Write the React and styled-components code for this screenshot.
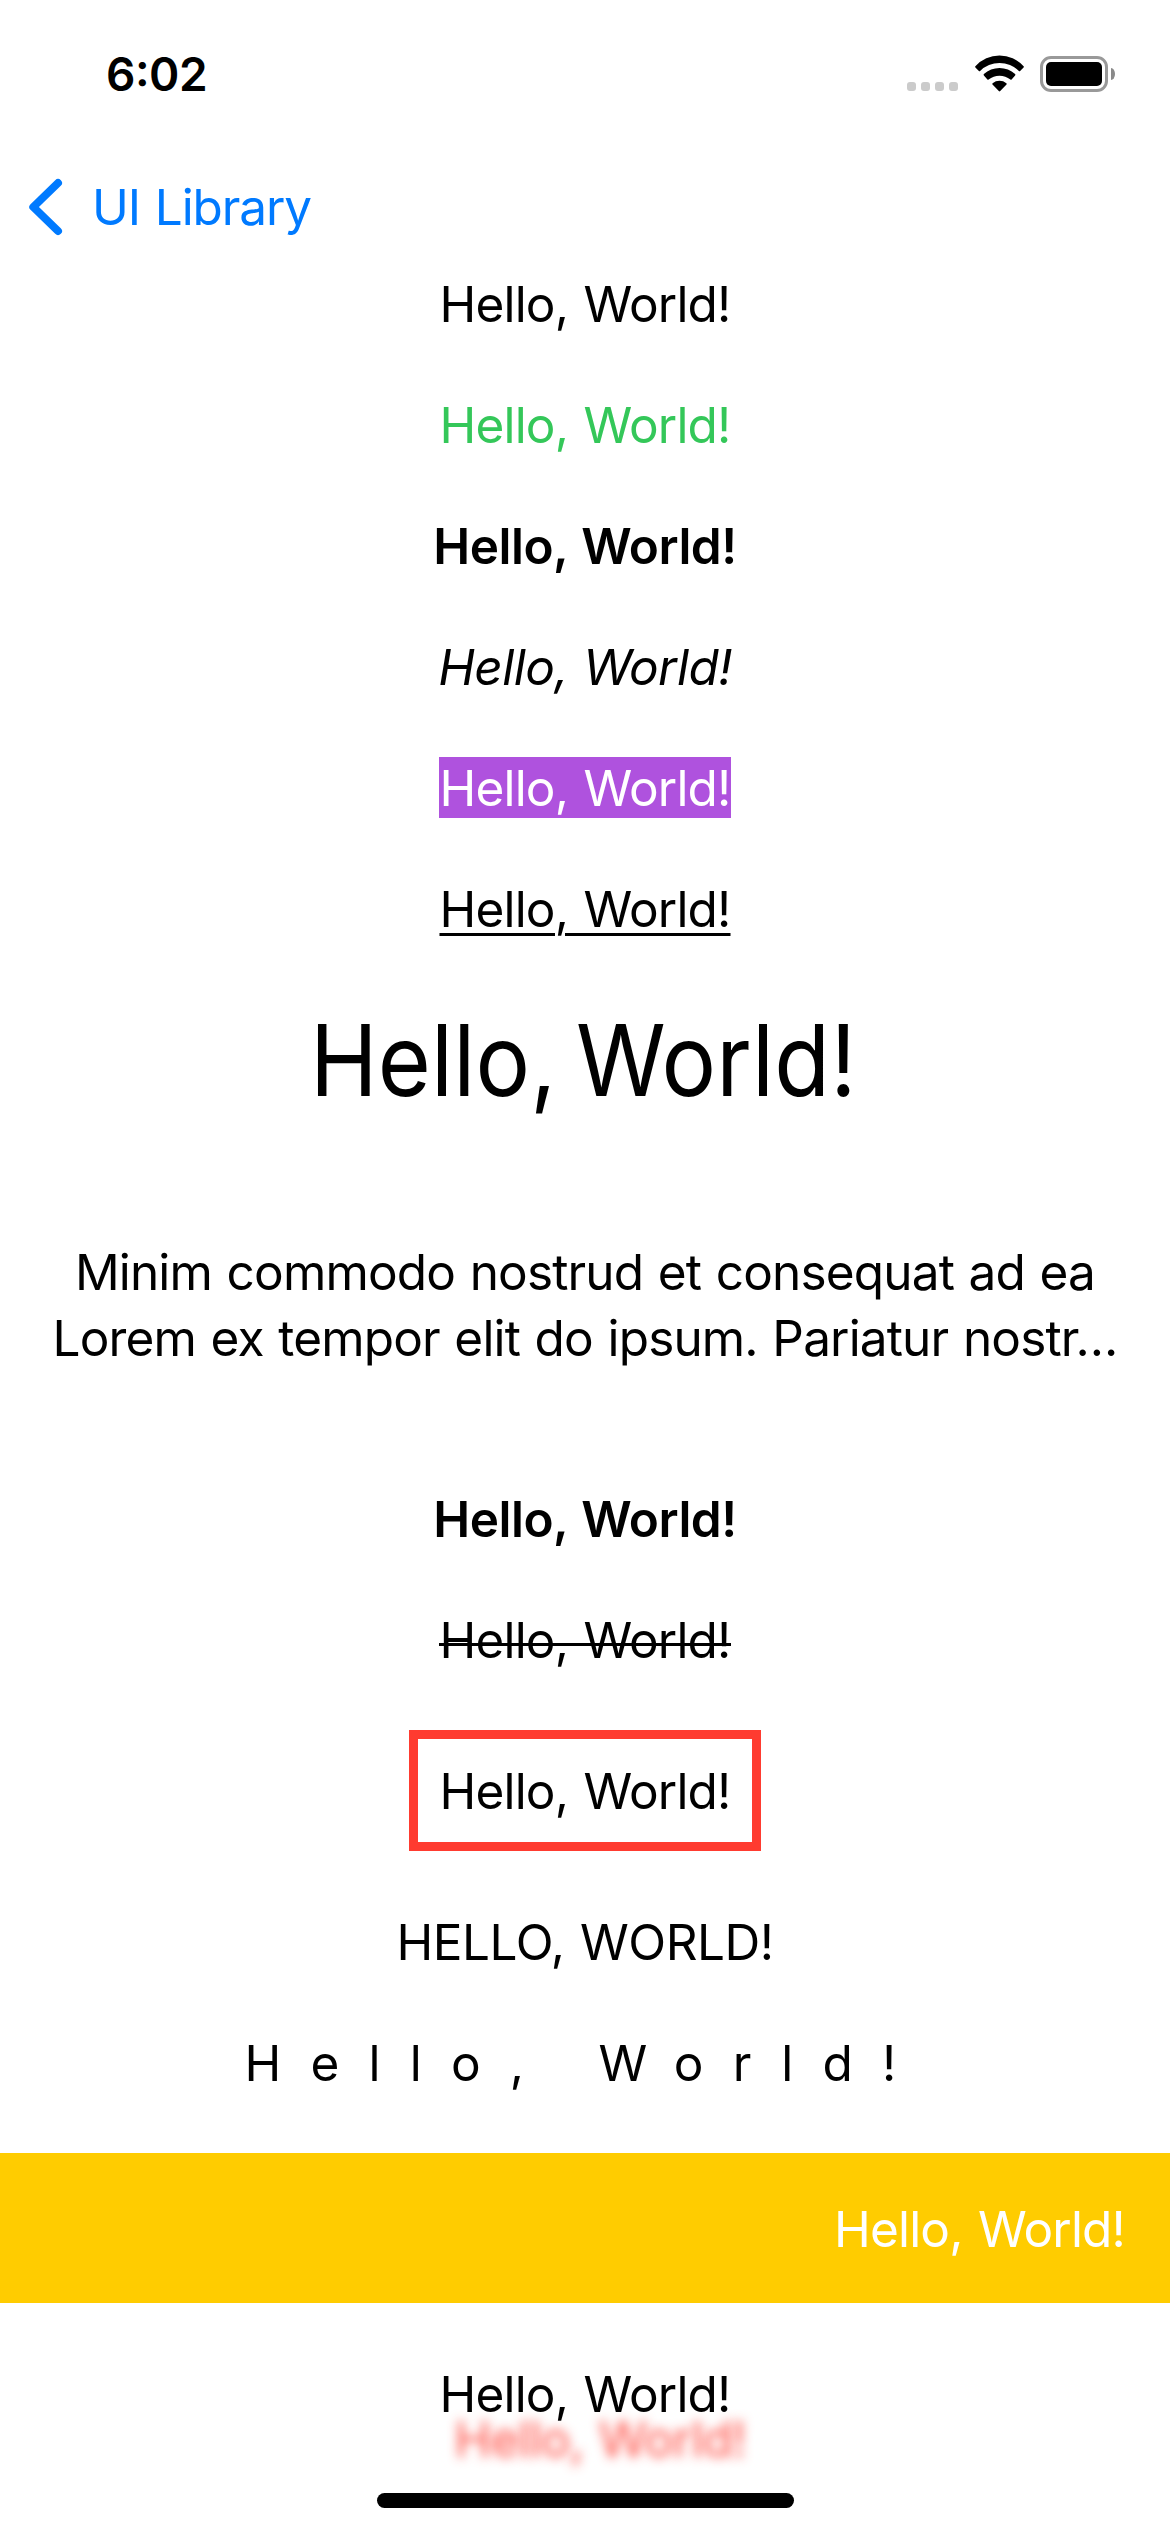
import React from "react";
import styled, { createGlobalStyle } from "styled-components";

const GlobalStyle = createGlobalStyle`
  * {
    box-sizing: border-box;
  }
  body {
    margin: 0;
    background: #fff;
    color: #000;
    font-family: Inter, Roboto, sans-serif;
    font-feature-settings: "calt" 1;
  }
`;

const Screen = styled.main`
  position: relative;
  width: 1170px;
  height: 2532px;
  overflow: hidden;
  background: #fff;
`;

const StatusBar = styled.header`
  display: flex;
  justify-content: space-between;
  align-items: flex-start;
  height: 141px;
  padding: 46px 55px 0 106px;
`;

const Time = styled.time`
  font-size: 46px;
  font-weight: 600;
  line-height: 56px;
  letter-spacing: -0.5px;
`;

const StatusIcons = styled.div`
  display: flex;
  align-items: flex-end;
  height: 46px;
`;

const Signal = styled.div`
  display: flex;
  gap: 5px;
  margin: 0 16.5px 1px 0;
`;

const SignalDot = styled.span`
  width: 9px;
  height: 9px;
  border-radius: 3px;
  background: #cbcbcb;
`;

const WifiIcon = styled.svg`
  display: block;
  width: 49px;
  height: 37px;
  margin: 0 16.5px 0 0;
`;

const Battery = styled.div`
  display: flex;
  align-items: center;
  gap: 3px;
`;

const BatteryCase = styled.div`
  width: 68px;
  height: 36px;
  padding: 3px;
  border: 3px solid #999;
  border-radius: 11px;
`;

const BatteryLevel = styled.div`
  height: 100%;
  border-radius: 5px;
  background: #000;
`;

const BatteryTip = styled.span`
  width: 4px;
  height: 12px;
  border-radius: 0 4px 4px 0 / 0 6px 6px 0;
  background: #8a8a8a;
`;

const NavBar = styled.nav`
  display: flex;
  align-items: center;
  height: 132px;
  padding-left: 28px;
`;

const BackButton = styled.a`
  display: flex;
  align-items: center;
  gap: 29px;
  color: #007aff;
  font-size: 49.5px;
  line-height: 60px;
  letter-spacing: -1.1px;
  word-spacing: 2px;
  text-decoration: none;
`;

const Chevron = styled.svg`
  display: block;
  width: 35px;
  height: 58px;
`;

const Stack = styled.section`
  display: flex;
  flex-direction: column;
  align-items: center;
  gap: 60px;
`;

const Label = styled.span`
  display: block;
  height: 61px;
  padding-top: 1px;
  font-size: 49.5px;
  font-weight: 400;
  line-height: 60px;
  letter-spacing: -0.82px;
  word-spacing: 2.3px;
  white-space: nowrap;
  color: ${(p) => p.$color || "#000"};
`;

const BoldLabel = styled(Label)`
  font-weight: 600;
  letter-spacing: -0.5px;
  word-spacing: 2px;
`;

const ItalicLabel = styled(Label)`
  font-style: italic;
  letter-spacing: -0.57px;
  word-spacing: 2px;
`;

const HighlightedLabel = styled(Label)`
  width: 292px;
  background: #af52de;
  text-align: center;
`;

const UnderlinedLabel = styled(Label)`
  width: 292px;
  text-align: center;
  text-decoration: underline;
  text-decoration-thickness: 3px;
  text-underline-offset: 6px;
`;

const StruckLabel = styled(Label)`
  position: relative;
  width: 292px;
  text-align: center;
  text-decoration: none;

  &::after {
    content: "";
    position: absolute;
    top: 34px;
    left: 0;
    right: 0;
    height: 3px;
    background: #000;
  }
`;

const LargeTitle = styled.h1`
  height: 122px;
  margin: 0;
  padding: 1px 3px 0 0;
  font-size: 99px;
  font-weight: 400;
  line-height: 120px;
  letter-spacing: 0.2px;
  word-spacing: -7px;
  white-space: nowrap;
  transform: scaleX(0.92);
`;

const Paragraph = styled.p`
  display: flex;
  flex-direction: column;
  align-items: center;
  gap: 5px;
  margin: 0;
  padding: 60px 0;
`;

const ParagraphLine = styled(Label)`
  letter-spacing: -0.84px;
  word-spacing: 1.5px;
`;

const BorderedBox = styled.div`
  display: flex;
  justify-content: center;
  width: 352px;
  padding: 21px 0;
  border: 9px solid #ff3b30;
`;

const UppercaseLabel = styled(Label)`
  letter-spacing: -0.5px;
  word-spacing: 2px;
  text-transform: uppercase;
`;

const TrackedLabel = styled(Label)`
  letter-spacing: 29.2px;
  word-spacing: 2px;
`;

const Banner = styled.div`
  display: flex;
  justify-content: flex-end;
  align-self: stretch;
  padding: 45px 45px 44px 0;
  background: #ffcc00;
`;

const ShadowLabel = styled(Label)`
  text-shadow: 15px 45px 11px rgba(255, 59, 48, 0.9);
`;

const HomeIndicator = styled.div`
  position: absolute;
  left: 377px;
  bottom: 24px;
  width: 417px;
  height: 15px;
  border-radius: 8px;
  background: #000;
`;

const hello = "Hello, World!";

export default function App() {
  return (
    <Screen>
      <GlobalStyle />
      <StatusBar>
        <Time>6:02</Time>
        <StatusIcons>
          <Signal>
            {[0, 1, 2, 3].map((n) => (
              <SignalDot key={n} />
            ))}
          </Signal>
          <WifiIcon viewBox="0 0 49 37">
            <path d="M.4 11.2A32.4 32.4 0 0 1 48.6 11.2Q49.2 11.8 48.6 12.4L45.1 15.9Q44.5 16.4 43.9 15.9A27.6 27.6 0 0 0 5.1 15.9Q4.5 16.4 3.9 15.9L.4 12.4Q-.2 11.8 .4 11.2Z" />
            <path d="M8.9 19.1A22.7 22.7 0 0 1 40.1 19.1Q40.8 19.8 40.1 20.5L36.6 24.5Q36 25.1 35.4 24.6A17.6 17.6 0 0 0 13.6 24.6Q13 25.1 12.4 24.5L8.9 20.5Q8.2 19.8 8.9 19.1Z" />
            <path d="M17.6 28.3A11 11 0 0 1 31.4 28.3Q32.1 29 31.5 29.6L25.2 36.1Q24.5 36.8 23.8 36.1L17.5 29.6Q16.9 29 17.6 28.3Z" />
          </WifiIcon>
          <Battery>
            <BatteryCase>
              <BatteryLevel />
            </BatteryCase>
            <BatteryTip />
          </Battery>
        </StatusIcons>
      </StatusBar>
      <NavBar>
        <BackButton>
          <Chevron viewBox="0 0 35 58" fill="none">
            <path
              d="M30 5 5.3 29 30 53"
              stroke="currentColor"
              strokeWidth="8"
              strokeLinecap="round"
              strokeLinejoin="round"
            />
          </Chevron>
          UI Library
        </BackButton>
      </NavBar>
      <Stack>
        <Label>{hello}</Label>
        <Label $color="#34c759">{hello}</Label>
        <BoldLabel>{hello}</BoldLabel>
        <ItalicLabel>{hello}</ItalicLabel>
        <HighlightedLabel $color="#fff">{hello}</HighlightedLabel>
        <UnderlinedLabel>{hello}</UnderlinedLabel>
        <LargeTitle>{hello}</LargeTitle>
        <Paragraph>
          <ParagraphLine>Minim commodo nostrud et consequat ad ea</ParagraphLine>
          <ParagraphLine>Lorem ex tempor elit do ipsum. Pariatur nostr…</ParagraphLine>
        </Paragraph>
        <BoldLabel>{hello}</BoldLabel>
        <StruckLabel as="s">{hello}</StruckLabel>
        <BorderedBox>
          <Label>{hello}</Label>
        </BorderedBox>
        <UppercaseLabel>{hello}</UppercaseLabel>
        <TrackedLabel>{hello}</TrackedLabel>
        <Banner>
          <Label $color="#fff">{hello}</Label>
        </Banner>
        <ShadowLabel>{hello}</ShadowLabel>
      </Stack>
      <HomeIndicator />
    </Screen>
  );
}
